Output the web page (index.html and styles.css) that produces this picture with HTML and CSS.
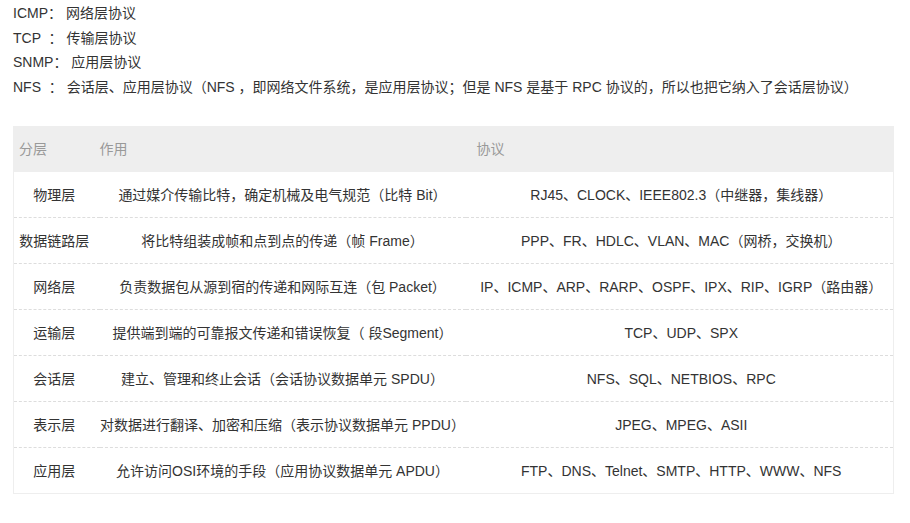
FILE: index.html
```html
<!DOCTYPE html>
<html lang="zh-CN">
<head>
<meta charset="utf-8">
<link rel="stylesheet" href="styles.css">
</head>
<body>
<div class="page">
  <div class="notes">
    <p>ICMP： 网络层协议</p>
    <p>TCP &nbsp;： 传输层协议</p>
    <p>SNMP： 应用层协议</p>
    <p>NFS &nbsp;： 会话层、应用层协议（NFS ，即网络文件系统，是应用层协议；但是 NFS 是基于 RPC 协议的，所以也把它纳入了会话层协议）</p>
  </div>
  <table class="osi">
    <colgroup>
      <col class="c1"><col class="c2"><col class="c3">
    </colgroup>
    <thead>
      <tr><th class="h1">分层</th><th class="h2">作用</th><th class="h3">协议</th></tr>
    </thead>
    <tbody>
      <tr><td class="n">物理层</td><td>通过媒介传输比特，确定机械及电气规范（比特 Bit）</td><td class="p">RJ45、CLOCK、IEEE802.3（中继器，集线器）</td></tr>
      <tr><td class="n">数据链路层</td><td>将比特组装成帧和点到点的传递（帧 Frame）</td><td class="p">PPP、FR、HDLC、VLAN、MAC（网桥，交换机）</td></tr>
      <tr><td class="n">网络层</td><td>负责数据包从源到宿的传递和网际互连（包 Packet）</td><td class="p">IP、ICMP、ARP、RARP、OSPF、IPX、RIP、IGRP（路由器）</td></tr>
      <tr><td class="n">运输层</td><td>提供端到端的可靠报文传递和错误恢复（ 段Segment）</td><td class="p">TCP、UDP、SPX</td></tr>
      <tr><td class="n">会话层</td><td>建立、管理和终止会话（会话协议数据单元 SPDU）</td><td class="p">NFS、SQL、NETBIOS、RPC</td></tr>
      <tr><td class="n">表示层</td><td>对数据进行翻译、加密和压缩（表示协议数据单元 PPDU）</td><td class="p">JPEG、MPEG、ASII</td></tr>
      <tr><td class="n">应用层</td><td>允许访问OSI环境的手段（应用协议数据单元 APDU）</td><td class="p">FTP、DNS、Telnet、SMTP、HTTP、WWW、NFS</td></tr>
    </tbody>
  </table>
</div>
</body>
</html>
```
FILE: styles.css
```css
html, body {
  margin: 0;
  padding: 0;
  background: #fff;
}
.page {
  padding: 1px 13px 0 13px;
  font-family: "Liberation Sans", Arial, "Noto Sans CJK SC", sans-serif;
  font-size: 14px;
  color: #333;
}
.notes p {
  margin: 0;
  line-height: 24.6px;
  white-space: nowrap;
}
.osi {
  margin-top: 27px;
  width: 880px;
  border-collapse: collapse;
  table-layout: fixed;
  border: 1px solid #eee;
  border-top: none;
}
.c1 { width: 86px; }
.c2 { width: 366px; }
.c3 { width: 428px; }
.osi thead tr {
  background: #eeeeee;
}
.osi th {
  height: 46px;
  padding: 0;
  font-weight: normal;
  color: #999;
  text-align: left;
  line-height: 20px;
}
.osi th.h1 { padding-left: 5px; }
.osi th.h2 { padding-left: 0; }
.osi th.h3 { padding-left: 11px; }
.osi td {
  height: 45px;
  padding: 0;
  text-align: center;
  white-space: nowrap;
  line-height: 20px;
  border-bottom: 1px dashed #ddd;
}
.osi td.n {
  padding-right: 5px;
}
.osi td.p {
  padding-left: 4px;
}
.osi tbody tr:last-child td {
  border-bottom: 1px solid #eee;
}
```
